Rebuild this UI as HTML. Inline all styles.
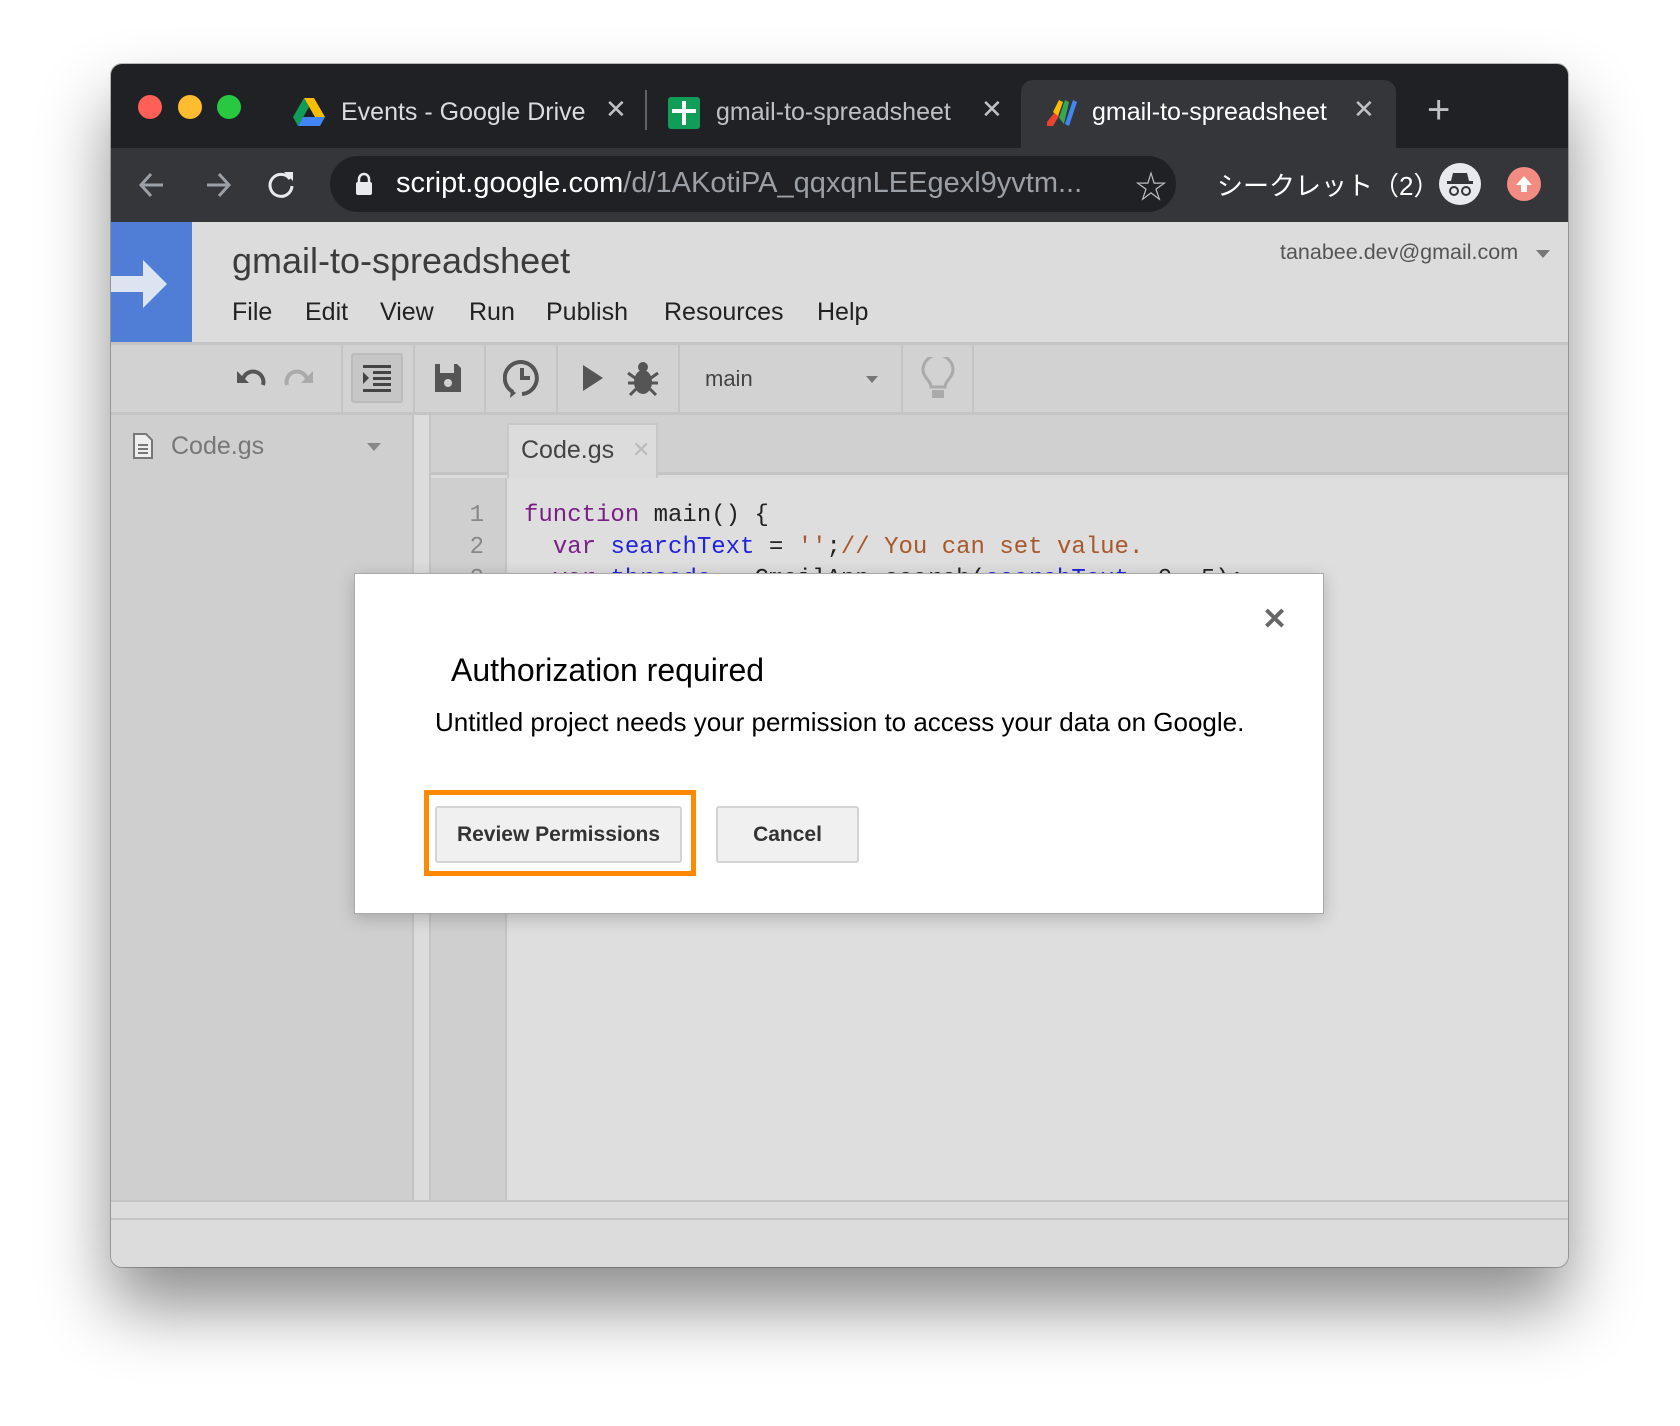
<!DOCTYPE html>
<html><head><meta charset="utf-8"><style>
*{box-sizing:border-box;margin:0;padding:0}
body{width:1680px;height:1426px;background:#fff;position:relative;overflow:hidden;font-family:"Liberation Sans","Noto Sans CJK JP",sans-serif}
.win{position:absolute;left:111px;top:64px;width:1457px;height:1203px;border-radius:11px;overflow:hidden;box-shadow:0 40px 70px rgba(0,0,0,.45),0 0 0 1px rgba(0,0,0,.25);background:#d0d0d0}
.abs{position:absolute}
.tabbar{left:0;top:0;width:100%;height:84px;background:#202124}
.dot{width:24px;height:24px;border-radius:50%;top:31px}
.tabt{font-size:25px;color:#e8eaed;top:34px;white-space:nowrap}
.x{font-size:26px;color:#bdc1c6;top:30px}
.active{left:910px;top:16px;width:375px;height:68px;background:#35363a;border-radius:12px 12px 0 0}
.tb{left:0;top:84px;width:100%;height:74px;background:#35363a}
.omni{left:219px;top:8px;width:846px;height:56px;border-radius:28px;background:#202124}
.page{left:0;top:158px;width:100%;height:1045px;background:#dcdcdc}
.menu span{position:absolute;top:0}
.sep{width:2px;background:#c4c4c4;top:0;height:72px}
.mono{font-family:"Liberation Mono",monospace}
</style></head><body>
<div class="win">
 <div class="abs tabbar">
  <div class="abs dot" style="left:27px;background:#fe5f57"></div>
  <div class="abs dot" style="left:67px;background:#febc2e"></div>
  <div class="abs dot" style="left:106px;background:#28c840"></div>
  <svg class="abs" style="left:182px;top:34px" width="32" height="28" viewBox="0 0 32 28"><path d="M11 0h10l11 19h-10z" fill="#fbbc04"/><path d="M11 0L0 19l5 9 11-19z" fill="#0f9d58"/><path d="M5 28h22l5-9H10z" fill="#4285f4"/></svg>
  <div class="abs tabt" style="left:230px;color:#dadce0">Events - Google Drive</div>
  <div class="abs x" style="left:494px">✕</div>
  <div class="abs" style="left:534px;top:26px;width:2px;height:40px;background:#5f6368"></div>
  <div class="abs" style="left:557px;top:33px;width:32px;height:32px;background:#0f9d58;border-radius:3px"><div class="abs" style="left:14px;top:4px;width:4px;height:24px;background:#fff"></div><div class="abs" style="left:4px;top:12px;width:24px;height:4px;background:#fff"></div></div>
  <div class="abs tabt" style="left:605px;color:#bdc1c6;width:252px;overflow:hidden">gmail-to-spreadsheet</div>
  <div class="abs x" style="left:870px">✕</div>
  <div class="abs active"></div>
  <svg class="abs" style="left:934px;top:34px" width="32" height="30" viewBox="0 0 32 30"><path d="M2 24l8-10 4 4-6 10H2z" fill="#ea4335"/><path d="M8 14l6-12 4 2-5 14z" fill="#fbbc04"/><path d="M14 20l6-18 4 2-5 22z" fill="#34a853"/><path d="M20 26l8-24 4 2-8 24z" fill="#4285f4"/></svg>
  <div class="abs tabt" style="left:981px;color:#fff">gmail-to-spreadsheet</div>
  <div class="abs x" style="left:1242px">✕</div>
  <div class="abs" style="left:1316px;top:24px;font-size:40px;color:#bdc1c6;font-weight:300">+</div>
 </div>
 <div class="abs tb">
  <svg class="abs" style="left:26px;top:20px" width="110" height="34" viewBox="0 0 110 34" fill="none" stroke-width="3"><path d="M26 17H4M14 6L4 17l10 11" stroke="#9aa0a6"/><path d="M70 17h22M82 6l10 11-10 11" stroke="#9aa0a6"/></svg>
  <svg class="abs" style="left:154px;top:20px" width="32" height="32" viewBox="0 0 32 32" fill="none"><path d="M25 11A11 11 0 1 0 27 18" stroke="#e8eaed" stroke-width="3"/><path d="M19 4h9v9z" fill="#e8eaed"/></svg>
  <div class="abs omni">
   <svg class="abs" style="left:25px;top:16px" width="18" height="24" viewBox="0 0 18 24"><path d="M4 10V7a5 5 0 0 1 10 0v3" stroke="#e8eaed" stroke-width="2.5" fill="none"/><rect x="1" y="10" width="16" height="13" rx="2" fill="#e8eaed"/></svg>
   <div class="abs" style="left:66px;top:11px;font-size:29px;color:#fff;white-space:nowrap">script.google.com<span style="color:#9aa0a6">/d/1AKotiPA_qqxqnLEEgexl9yvtm...</span></div>
   <div class="abs" style="left:805px;top:6px;font-size:32px;color:#bdc1c6">☆</div>
  </div>
  <div class="abs" style="left:1106px;top:18px;font-size:26px;color:#fff;white-space:nowrap">シークレット（2）</div>
  <div class="abs" style="left:1328px;top:15px;width:42px;height:42px;border-radius:50%;background:#e8eaed">
   <svg class="abs" style="left:6px;top:8px" width="30" height="28" viewBox="0 0 30 28"><path d="M8 2h14l2 8H6z" fill="#35363a"/><rect x="2" y="10" width="26" height="3" fill="#35363a"/><circle cx="9" cy="20" r="4" fill="none" stroke="#35363a" stroke-width="2"/><circle cx="21" cy="20" r="4" fill="none" stroke="#35363a" stroke-width="2"/></svg>
  </div>
  <div class="abs" style="left:1396px;top:19px;width:34px;height:34px;border-radius:50%;background:#f28b82">
   <svg class="abs" style="left:7px;top:7px" width="20" height="20" viewBox="0 0 20 20"><path d="M10 2l8 9h-5v7H7v-7H2z" fill="#fff"/></svg>
  </div>
 </div>
 <div class="abs page">
  <div class="abs" style="left:0;top:0;width:81px;height:120px;background:#507ed6">
   <svg class="abs" style="left:0;top:32px" width="60" height="60" viewBox="0 0 60 60"><path d="M0 22h32V6l24 24-24 24V38H0z" fill="#dce3f1"/></svg>
  </div>
  <div class="abs" style="left:121px;top:18px;font-size:36px;color:#3c3c3c">gmail-to-spreadsheet</div>
  <div class="abs menu" style="left:0;top:76px;font-size:25px;color:#222">
   <span style="left:121px">File</span><span style="left:194px">Edit</span><span style="left:269px">View</span><span style="left:358px">Run</span><span style="left:435px">Publish</span><span style="left:553px">Resources</span><span style="left:706px">Help</span>
  </div>
  <div class="abs" style="left:1169px;top:18px;font-size:21.5px;color:#555">tanabee.dev@gmail.com</div>
  <div class="abs" style="left:1425px;top:28px;border:7px solid transparent;border-top:8px solid #777"></div>
  <div class="abs" style="left:0;top:120px;width:100%;height:73px;background:#d2d2d2;border-top:3px solid #c4c4c4;border-bottom:3px solid #c4c4c4">
   <svg class="abs" style="left:124px;top:18px" width="80" height="30" viewBox="0 0 80 30" fill="none" stroke-width="4"><path d="M28 22A10 10 0 0 0 8 16" stroke="#555"/><path d="M2 8v12h12z" fill="#555"/><path d="M52 22A10 10 0 0 1 72 16" stroke="#aaa"/><path d="M78 8v12H66z" fill="#aaa"/></svg>
   <div class="abs sep" style="left:230px;height:68px"></div>
   <div class="abs" style="left:240px;top:8px;width:52px;height:50px;background:#c6c6c6;border:2px solid #bbb;border-radius:3px">
    <svg class="abs" style="left:10px;top:10px" width="30" height="28" viewBox="0 0 30 28" fill="#444"><rect x="0" y="0" width="28" height="3"/><rect x="10" y="6" width="18" height="3"/><rect x="10" y="12" width="18" height="3"/><rect x="10" y="18" width="18" height="3"/><rect x="0" y="24" width="28" height="3"/><path d="M0 7l6 6-6 6z"/></svg>
   </div>
   <div class="abs sep" style="left:302px;height:68px"></div>
   <svg class="abs" style="left:322px;top:17px" width="30" height="32" viewBox="0 0 30 32"><path d="M2 2h22l4 4v24H2z" fill="#555"/><rect x="7" y="2" width="14" height="9" fill="#d2d2d2"/><circle cx="15" cy="21" r="4" fill="#d2d2d2"/></svg>
   <div class="abs sep" style="left:373px;height:68px"></div>
   <svg class="abs" style="left:392px;top:14px" width="38" height="40" viewBox="0 0 38 40" fill="none" stroke="#555" stroke-width="4"><path d="M10 33A16 16 0 1 1 19 35"/><path d="M19 9v10h8"/><path d="M8 30l-1 9 6-5" fill="#555" stroke="none"/></svg>
   <div class="abs sep" style="left:445px;height:68px"></div>
   <svg class="abs" style="left:470px;top:20px" width="22" height="26" viewBox="0 0 22 26"><path d="M2 0l20 13L2 26z" fill="#555"/></svg>
   <svg class="abs" style="left:515px;top:14px" width="34" height="38" viewBox="0 0 34 38" fill="#555" stroke="#555" stroke-width="3"><ellipse cx="17" cy="23" rx="9" ry="12" stroke="none"/><circle cx="17" cy="8" r="5" stroke="none"/><path d="M2 14l7 5M32 14l-7 5M2 24h7M32 24h-7M4 36l6-6M30 36l-6-6" fill="none"/></svg>
   <div class="abs sep" style="left:567px;height:68px"></div>
   <div class="abs" style="left:594px;top:21px;font-size:22px;color:#444">main</div>
   <div class="abs" style="left:755px;top:31px;border:6px solid transparent;border-top:7px solid #777"></div>
   <div class="abs sep" style="left:790px;height:68px"></div>
   <svg class="abs" style="left:810px;top:12px" width="34" height="44" viewBox="0 0 34 44" fill="none" stroke="#aaa" stroke-width="3"><path d="M10 30C10 24 2 20 2 13A15 15 0 0 1 32 13C32 20 24 24 24 30z"/><rect x="11" y="33" width="12" height="8" fill="#aaa" stroke="none"/></svg>
   <div class="abs sep" style="left:861px;height:68px"></div>
  </div>
  <div class="abs" style="left:0;top:193px;width:301px;height:785px;background:#cfcfcf">
   <svg class="abs" style="left:22px;top:18px" width="20" height="26" viewBox="0 0 20 26"><path d="M1 1h12l6 6v18H1z" fill="#eee" stroke="#777" stroke-width="2"/><path d="M5 12h10M5 16h10M5 20h10" stroke="#777" stroke-width="2"/></svg>
   <div class="abs" style="left:60px;top:17px;font-size:25px;color:#777">Code.gs</div>
   <div class="abs" style="left:256px;top:28px;border:7px solid transparent;border-top:8px solid #888"></div>
  </div>
  <div class="abs" style="left:301px;top:193px;width:19px;height:785px;background:#dcdcdc;border-left:2px solid #c4c4c4;border-right:2px solid #c4c4c4"></div>
  <div class="abs" style="left:320px;top:193px;width:1137px;height:60px;background:#d0d0d0;border-bottom:3px solid #c4c4c4"></div>
  <div class="abs" style="left:396px;top:201px;width:151px;height:55px;background:#dcdcdc;border:2px solid #c8c8c8;border-bottom:none"><span class="abs" style="left:12px;top:11px;font-size:25px;color:#444">Code.gs</span><span class="abs" style="left:123px;top:12px;font-size:22px;color:#bbb">✕</span></div>
  <div class="abs" style="left:320px;top:256px;width:76px;height:722px;background:#cfcfcf;border-right:2px solid #c4c4c4"></div>
  <div class="abs" style="left:398px;top:256px;width:1059px;height:722px;background:#dedede"></div>
  <div class="abs mono" style="left:0;top:278px;font-size:24px;line-height:32px;width:1457px">
   <div class="abs" style="left:333px;width:40px;text-align:right;color:#888">1<br>2<br>3</div>
   <div class="abs" style="left:413px;white-space:pre;color:#222"><span style="color:#7a1f86">function</span> main() {
  <span style="color:#7a1f86">var</span> <span style="color:#2222dd">searchText</span> = <span style="color:#a8582d">''</span>;<span style="color:#a8582d">// You can set value.</span>
  <span style="color:#7a1f86">var</span> <span style="color:#2222dd">threads</span> = GmailApp.search(<span style="color:#2222dd">searchText</span>, 0, 5);</div>
  </div>
  <div class="abs" style="left:0;top:978px;width:100%;height:20px;background:#dcdcdc;border-top:2px solid #c4c4c4;border-bottom:2px solid #c4c4c4"></div>
  <div class="abs" style="left:243px;top:351px;width:970px;height:341px;background:#fff;border:1px solid #aaa;box-shadow:0 4px 16px rgba(0,0,0,.2)">
   <div class="abs" style="left:907px;top:28px;font-size:30px;color:#666;font-weight:bold">✕</div>
   <div class="abs" style="left:96px;top:78px;font-size:32px;color:#000">Authorization required</div>
   <div class="abs" style="left:80px;top:133px;font-size:26px;color:#000;white-space:nowrap">Untitled project needs your permission to access your data on Google.</div>
   <div class="abs" style="left:69px;top:216px;width:272px;height:86px;border:5px solid #ff8a00"></div>
   <div class="abs" style="left:80px;top:232px;width:247px;height:57px;background:#f0f0f0;border:2px solid #d4d4d4;border-radius:3px;font-size:21px;font-weight:bold;color:#333;text-align:center;line-height:53px">Review Permissions</div>
   <div class="abs" style="left:361px;top:232px;width:143px;height:57px;background:#f0f0f0;border:2px solid #d4d4d4;border-radius:3px;font-size:21px;font-weight:bold;color:#333;text-align:center;line-height:53px">Cancel</div>
  </div>
 </div>
</div>
</body></html>
